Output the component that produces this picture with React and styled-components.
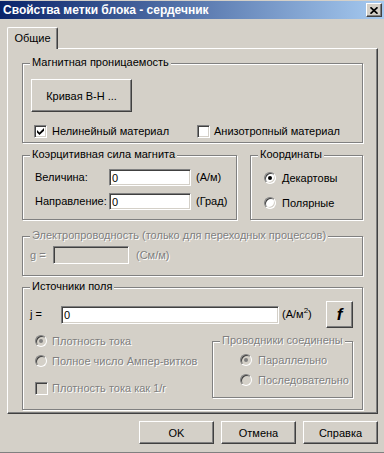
import React from "react"
import styled, { createGlobalStyle, css } from "styled-components"

const face = "#d4d0c8"
const shadow = "#808080"
const darkShadow = "#404040"

const GlobalStyle = createGlobalStyle`
  * {
    box-sizing: border-box;
  }
  html,
  body {
    margin: 0;
    background: ${face};
  }
  body {
    font-family: "Liberation Sans", Arial, sans-serif;
    font-size: 11px;
    line-height: 13px;
    color: #000;
  }
`

const raised = css`
  background: ${face};
  border: 1px solid;
  border-color: #fff ${darkShadow} ${darkShadow} #fff;
  box-shadow: inset -1px -1px 0 ${shadow};
`

const sunken = css`
  border: 1px solid;
  border-color: ${shadow} #fff #fff ${shadow};
  box-shadow: inset 1px 1px 0 ${darkShadow}, inset -1px -1px 0 ${face};
`

const disabledText = css`
  color: ${shadow};
  text-shadow: 1px 1px 0 #fff;
`

const Dialog = styled.div`
  width: 384px;
  height: 453px;
  display: flex;
  flex-direction: column;
  padding-top: 1px;
  border-bottom: 1px solid ${shadow};
`

const TitleBar = styled.div`
  height: 18px;
  display: flex;
  align-items: center;
  justify-content: space-between;
  padding: 0 2px 0 3px;
  background: linear-gradient(to right, #0a246a, #a6caf0);
`

const TitleText = styled.span`
  color: #fff;
  font-weight: bold;
  font-size: 12px;
  white-space: nowrap;
`

const CloseButton = styled.div`
  ${raised}
  width: 16px;
  height: 14px;
  display: flex;
  align-items: center;
  justify-content: center;
`

const Body = styled.div`
  flex: 1;
  display: flex;
  flex-direction: column;
  padding: 8px 6px 0 7px;
`

const TabStrip = styled.div`
  display: flex;
  height: 21px;
`

const Tab = styled.div`
  position: relative;
  z-index: 1;
  width: 51px;
  height: 22px;
  background: ${face};
  border-left: 1px solid #fff;
  border-top: 1px solid #fff;
  border-right: 1px solid ${darkShadow};
  border-radius: 2px 2px 0 0;
  box-shadow: inset -1px 0 0 ${shadow};
  display: flex;
  align-items: center;
  justify-content: center;
  padding-bottom: 1px;
`

const Panel = styled.div`
  width: 371px;
  height: 366px;
  border: 1px solid;
  border-color: #fff ${darkShadow} ${darkShadow} #fff;
  box-shadow: inset -1px -1px 0 ${shadow};
  padding: 14px 0 0 14px;
  display: flex;
  flex-direction: column;
`

const GroupBox = styled.div`
  position: relative;
  flex: none;
  width: ${(p) => p.$w}px;
  height: ${(p) => p.$h}px;
  margin-top: ${(p) => p.$mt || 0}px;
  padding: ${(p) => p.$pad || 0};
  border: 1px solid ${shadow};
  box-shadow: inset 1px 1px 0 #fff, 1px 1px 0 #fff;
  display: flex;
  flex-direction: column;
  align-items: flex-start;
`

const SubGroup = styled(GroupBox)`
  margin-left: auto;
`

const Caption = styled.span`
  position: absolute;
  top: -8px;
  left: 7px;
  padding: 0 2px;
  background: ${face};
  white-space: nowrap;
  ${(p) => p.$disabled && disabledText}
`

const Text = styled.span`
  white-space: nowrap;
  ${(p) => p.$disabled && disabledText}
`

const PushButton = styled.button`
  ${raised}
  flex: none;
  width: ${(p) => p.$w}px;
  height: ${(p) => p.$h}px;
  margin-left: ${(p) => (p.$push ? "auto" : "0")};
  padding: 0;
  font-family: inherit;
  font-size: 11px;
  font-weight: normal;
  color: #000;
  display: flex;
  align-items: center;
  justify-content: center;
`

const FormulaGlyph = styled.span`
  font-family: "Liberation Sans", Arial, sans-serif;
  font-weight: bold;
  font-style: italic;
  font-size: 17px;
  line-height: 17px;
`

const TextField = styled.input`
  ${sunken}
  flex: none;
  width: ${(p) => p.$w}px;
  height: ${(p) => p.$h || 17}px;
  padding: 0 0 0 2px;
  margin: 0;
  background: ${(p) => (p.disabled ? face : "#fff")};
  font: inherit;
  color: #000;
  outline: none;
`

const Row = styled.div`
  display: flex;
  align-items: ${(p) => p.$align || "center"};
  height: ${(p) => (p.$h ? `${p.$h}px` : "auto")};
  margin-top: ${(p) => p.$mt || 0}px;
  margin-left: ${(p) => p.$ml || 0}px;
  gap: ${(p) => p.$gap || 0}px;
  width: ${(p) => (p.$full ? "100%" : "auto")};
`

const Column = styled.div`
  display: flex;
  flex-direction: column;
  margin-left: ${(p) => p.$ml || 0}px;
  margin-top: ${(p) => p.$mt || 0}px;
`

const FieldLabel = styled(Text)`
  width: ${(p) => p.$w}px;
  flex: none;
`

const Unit = styled(Text)`
  margin-left: ${(p) => p.$gap}px;
`

const Option = styled.label`
  display: flex;
  align-items: center;
  gap: ${(p) => p.$gap || 5}px;
  width: ${(p) => (p.$w ? `${p.$w}px` : "auto")};
  height: ${(p) => p.$h || 13}px;
  margin-top: ${(p) => p.$mt || 0}px;
`

const CheckBox = styled.span`
  ${sunken}
  flex: none;
  width: 13px;
  height: 13px;
  background: ${(p) => (p.$disabled ? face : "#fff")};
  display: flex;
  align-items: center;
  justify-content: center;
`

const Radio = styled.span`
  flex: none;
  width: 12px;
  height: 12px;
  border-radius: 50%;
  border: 1px solid;
  border-color: ${shadow} #fff #fff ${shadow};
  box-shadow: inset 1px 1px 0 ${darkShadow}, inset -1px -1px 0 ${face};
  background: ${(p) => (p.$disabled ? face : "#fff")};
  display: flex;
  align-items: center;
  justify-content: center;

  &::after {
    content: "";
    width: 4px;
    height: 4px;
    border-radius: 50%;
    background: ${(p) => (p.$disabled ? shadow : "#000")};
    display: ${(p) => (p.$checked ? "block" : "none")};
  }
`

const Footer = styled.div`
  display: flex;
  justify-content: flex-end;
  gap: 7px;
  margin-top: 7px;
`

const CheckMark = () => (
  <svg width="7" height="7" viewBox="0 0 7 7">
    <polygon points="0,2 2.5,4.5 7,0 7,2.8 2.5,7 0,4.6" fill="#000" />
  </svg>
)

const CloseGlyph = () => (
  <svg width="8" height="7" viewBox="0 0 8 7">
    <path d="M0.5 0.3 L7.5 6.7 M7.5 0.3 L0.5 6.7" stroke="#000" strokeWidth="1.7" />
  </svg>
)

const Check = ({ checked, disabled, children, ...rest }) => (
  <Option {...rest}>
    <CheckBox $disabled={disabled}>{checked && <CheckMark />}</CheckBox>
    <Text $disabled={disabled}>{children}</Text>
  </Option>
)

const RadioOption = ({ checked, disabled, children, ...rest }) => (
  <Option $h={12} {...rest}>
    <Radio $checked={checked} $disabled={disabled} />
    <Text $disabled={disabled}>{children}</Text>
  </Option>
)

export default function App() {
  return (
    <Dialog>
      <GlobalStyle />
      <TitleBar>
        <TitleText>Свойства метки блока - сердечник</TitleText>
        <CloseButton>
          <CloseGlyph />
        </CloseButton>
      </TitleBar>
      <Body>
        <TabStrip>
          <Tab>Общие</Tab>
        </TabStrip>
        <Panel>
          <GroupBox $w={341} $h={80} $pad="15px 0 0 8px">
            <Caption>Магнитная проницаемость</Caption>
            <PushButton $w={101} $h={33}>
              Кривая B-H ...
            </PushButton>
            <Row $mt={13} $ml={3}>
              <Check checked $w={163}>
                Нелинейный материал
              </Check>
              <Check $gap={4}>Анизотропный материал</Check>
            </Row>
          </GroupBox>

          <Row $align="flex-start" $mt={12} $gap={13}>
            <GroupBox $w={215} $h={65} $pad="13px 0 0 12px">
              <Caption>Коэрцитивная сила магнита</Caption>
              <Row $h={17}>
                <FieldLabel $w={74}>Величина:</FieldLabel>
                <TextField $w={82} defaultValue="0" />
                <Unit $gap={5}>(A/м)</Unit>
              </Row>
              <Row $h={17} $mt={7}>
                <FieldLabel $w={74}>Направление:</FieldLabel>
                <TextField $w={82} defaultValue="0" />
                <Unit $gap={5}>(Град)</Unit>
              </Row>
            </GroupBox>
            <GroupBox $w={113} $h={65} $pad="16px 0 0 13px">
              <Caption>Координаты</Caption>
              <RadioOption checked $gap={6}>
                Декартовы
              </RadioOption>
              <RadioOption $gap={6} $mt={13}>
                Полярные
              </RadioOption>
            </GroupBox>
          </Row>

          <GroupBox $w={341} $h={40} $mt={16} $pad="9px 0 0 7px">
            <Caption $disabled>Электропроводность (только для переходных процессов)</Caption>
            <Row $h={18}>
              <FieldLabel $w={23} $disabled>
                g =
              </FieldLabel>
              <TextField $w={76} $h={18} disabled />
              <Unit $gap={7} $disabled>
                (См/м)
              </Unit>
            </Row>
          </GroupBox>

          <GroupBox $w={341} $h={123} $mt={11} $pad="13px 9px 0 7px">
            <Caption>Источники поля</Caption>
            <Row $h={27} $full>
              <FieldLabel $w={31}>j =</FieldLabel>
              <TextField $w={218} $h={18} defaultValue="0" />
              <Unit $gap={3}>
                (A/м<sup style={{ fontSize: "8px", lineHeight: 0 }}>2</sup>)
              </Unit>
              <PushButton $w={27} $h={27} $push>
                <FormulaGlyph>f</FormulaGlyph>
              </PushButton>
            </Row>
            <Row $align="flex-start" $mt={6} $full>
              <Column $ml={5}>
                <RadioOption checked disabled $h={14}>
                  Плотность тока
                </RadioOption>
                <RadioOption disabled $h={14} $mt={6}>
                  Полное число Ампер-витков
                </RadioOption>
                <Check disabled $gap={4} $h={14} $mt={13}>
                  Плотность тока как 1/r
                </Check>
              </Column>
              <SubGroup $w={141} $h={57} $mt={7} $pad="12px 0 0 27px">
                <Caption $disabled>Проводники соединены</Caption>
                <RadioOption checked disabled $gap={6}>
                  Параллельно
                </RadioOption>
                <RadioOption disabled $gap={6} $mt={8}>
                  Последовательно
                </RadioOption>
              </SubGroup>
            </Row>
          </GroupBox>
        </Panel>
        <Footer>
          <PushButton $w={75} $h={23}>
            OK
          </PushButton>
          <PushButton $w={75} $h={23}>
            Отмена
          </PushButton>
          <PushButton $w={75} $h={23}>
            Справка
          </PushButton>
        </Footer>
      </Body>
    </Dialog>
  )
}
